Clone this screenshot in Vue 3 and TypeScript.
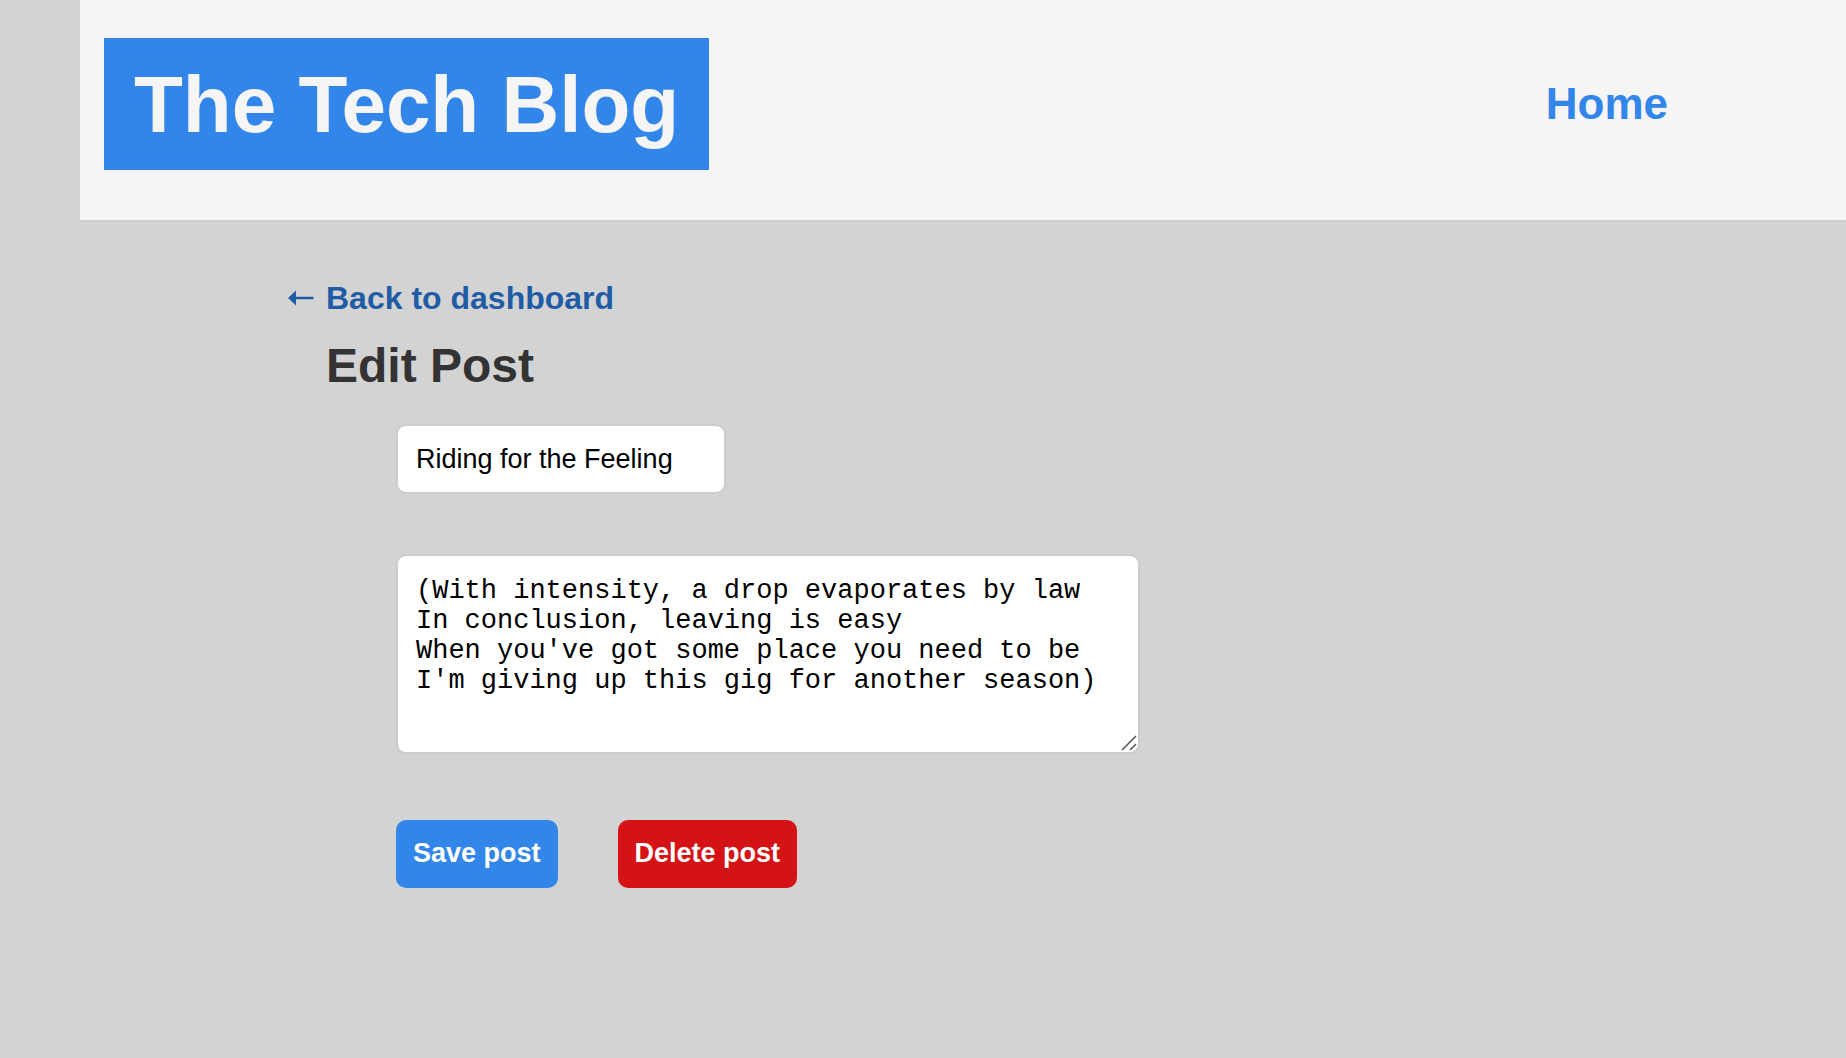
<script setup lang="ts">
import { ref } from 'vue'

const title = ref('Riding for the Feeling')
const body = ref(
  [
    '(With intensity, a drop evaporates by law',
    'In conclusion, leaving is easy',
    "When you've got some place you need to be",
    "I'm giving up this gig for another season)",
  ].join('\n'),
)
</script>

<template>
  <div class="page">
    <header class="header">
      <h1 class="brand">The Tech Blog</h1>
      <nav class="nav">
        <a class="nav-link" href="#home">Home</a>
      </nav>
    </header>

    <main class="main">
      <a class="back" href="#dashboard">
        <svg class="arrow" viewBox="0 0 26 16" width="26" height="16" aria-hidden="true">
          <path d="M0 8 L8 0.5 V6.7 H25.5 V9.3 H8 V15.5 Z" fill="currentColor" />
        </svg>
        <span>Back to dashboard</span>
      </a>
      <h2 class="heading">Edit Post</h2>

      <form class="form" @submit.prevent>
        <input v-model="title" class="field title-field" type="text" name="title" aria-label="Post title" />
        <div class="body-wrap">
          <textarea
            v-model="body"
            class="field body-field"
            name="body"
            aria-label="Post body"
            spellcheck="false"
          ></textarea>
          <svg class="grip" viewBox="0 0 16 16" width="16" height="16" aria-hidden="true">
            <path d="M1 15 L15 1 M9 15 L15 9" fill="none" stroke="#5a5a5a" stroke-width="1.6" />
          </svg>
        </div>
        <div class="actions">
          <button class="button save" type="submit">Save post</button>
          <button class="button delete" type="button">Delete post</button>
        </div>
      </form>
    </main>
  </div>
</template>

<style>
body {
  margin: 0;
  background: #d3d3d3;
}
</style>

<style scoped>
.page {
  margin-left: 80px;
  font-family: 'Liberation Sans', Arial, Helvetica, sans-serif;
  color: #333;
}

.header {
  display: flex;
  align-items: center;
  justify-content: space-between;
  padding: 38px 178px 50px 24px;
  border-bottom: 2px solid #ccc;
  background: #f5f5f5;
}

.brand {
  margin: 0;
  padding: 21px 30px 19px;
  background: #3386e9;
  color: #f5f5f5;
  font-size: 80px;
  line-height: 92px;
  font-weight: 700;
}

.nav-link {
  color: #3386e9;
  font-size: 44px;
  line-height: 52px;
  font-weight: 700;
  text-decoration: none;
}

.main {
  padding: 58px 24px 60px 208px;
}

.back {
  display: inline-flex;
  align-items: center;
  gap: 12px;
  color: #1f5ca5;
  font-size: 32px;
  line-height: 36px;
  font-weight: 700;
  text-decoration: none;
}

.heading {
  margin: 22px 0 30px 38px;
  font-size: 48px;
  line-height: 56px;
  font-weight: 700;
}

.form {
  display: flex;
  flex-direction: column;
  align-items: flex-start;
  gap: 60px;
  margin-left: 108px;
}

.field {
  box-sizing: border-box;
  display: block;
  margin: 0;
  padding: 18px;
  border: 2px solid #ccc;
  border-radius: 10px;
  outline: none;
  background: #fff;
  color: #000;
  font-size: 27px;
  line-height: 30px;
}

.title-field {
  width: 330px;
  font-family: 'Liberation Sans', Arial, sans-serif;
}

.body-wrap {
  position: relative;
  max-width: 100%;
}

.body-field {
  width: 744px;
  max-width: 100%;
  height: 200px;
  padding-top: 20px;
  font-family: 'Liberation Mono', 'Courier New', monospace;
}

.body-field::-webkit-resizer {
  background: transparent;
}

.grip {
  position: absolute;
  right: 3px;
  bottom: 3px;
  pointer-events: none;
}

.actions {
  display: flex;
  gap: 60px;
  padding-top: 6px;
}

.button {
  padding: 18px 17px 20px;
  border: 0;
  border-radius: 10px;
  color: #fff;
  font-family: 'Liberation Sans', Arial, sans-serif;
  font-size: 27px;
  line-height: 30px;
  font-weight: 700;
  cursor: pointer;
}

.save {
  background: #3386e9;
}

.delete {
  background: #d51317;
}
</style>
